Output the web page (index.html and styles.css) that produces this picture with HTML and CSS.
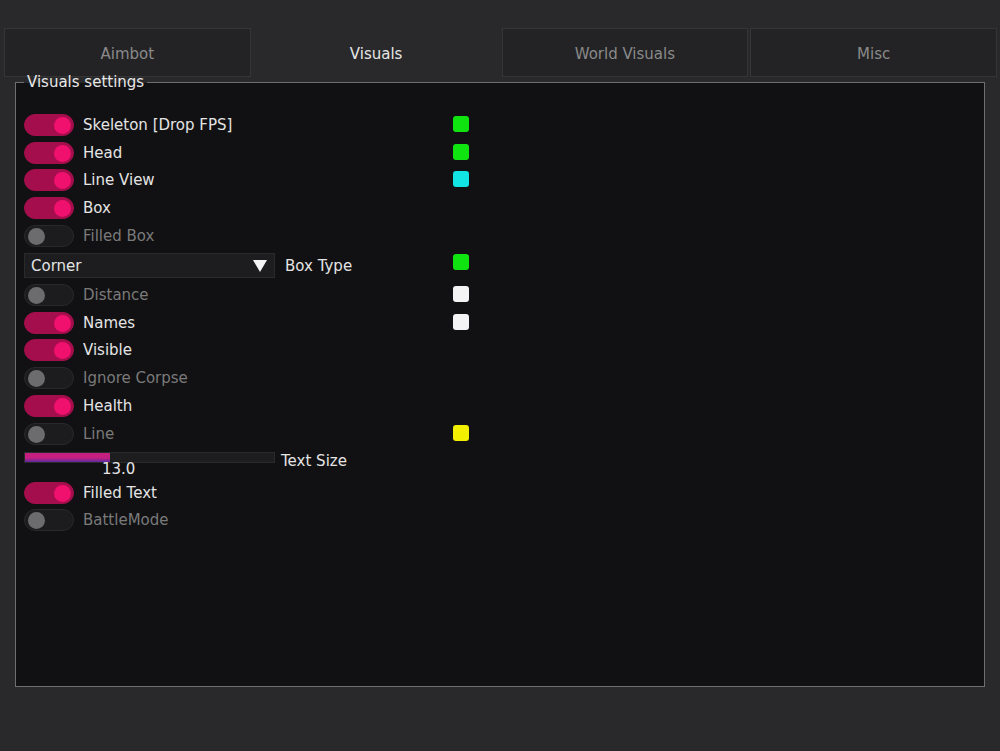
FILE: index.html
```html
<!DOCTYPE html>
<html lang="en">
<head>
    <meta charset="UTF-8">
    <meta name="viewport" content="width=device-width, initial-scale=1.0">
    <title>Visuals settings</title>
    <link rel="stylesheet" href="styles.css">
</head>
<body>
    <div class="tabs">
        <div class="tab">Aimbot</div>
        <div class="tab active">Visuals</div>
        <div class="tab">World Visuals</div>
        <div class="tab">Misc</div>
    </div>

    <fieldset class="panel">
        <legend>Visuals settings</legend>

        <div class="row">
            <div class="ctrl"><span class="toggle on"></span><span class="label">Skeleton [Drop FPS]</span></div>
            <span class="swatch green"></span>
        </div>
        <div class="row">
            <div class="ctrl"><span class="toggle on"></span><span class="label">Head</span></div>
            <span class="swatch green"></span>
        </div>
        <div class="row">
            <div class="ctrl"><span class="toggle on"></span><span class="label">Line View</span></div>
            <span class="swatch cyan"></span>
        </div>
        <div class="row">
            <div class="ctrl"><span class="toggle on"></span><span class="label">Box</span></div>
        </div>
        <div class="row">
            <div class="ctrl"><span class="toggle"></span><span class="label off">Filled Box</span></div>
        </div>

        <div class="row combo-row">
            <div class="ctrl">
                <div class="combo"><span>Corner</span><span class="arrow"></span></div>
                <span class="label">Box Type</span>
            </div>
            <span class="swatch green"></span>
        </div>

        <div class="row">
            <div class="ctrl"><span class="toggle"></span><span class="label off">Distance</span></div>
            <span class="swatch white"></span>
        </div>
        <div class="row">
            <div class="ctrl"><span class="toggle on"></span><span class="label">Names</span></div>
            <span class="swatch white"></span>
        </div>
        <div class="row">
            <div class="ctrl"><span class="toggle on"></span><span class="label">Visible</span></div>
        </div>
        <div class="row">
            <div class="ctrl"><span class="toggle"></span><span class="label off">Ignore Corpse</span></div>
        </div>
        <div class="row">
            <div class="ctrl"><span class="toggle on"></span><span class="label">Health</span></div>
        </div>
        <div class="row">
            <div class="ctrl"><span class="toggle"></span><span class="label off">Line</span></div>
            <span class="swatch yellow"></span>
        </div>

        <div class="slider-row">
            <div class="slider-line">
                <div class="slider"><div class="fill" style="width: 34%"></div></div>
                <span class="label">Text Size</span>
            </div>
            <div class="value">13.0</div>
        </div>

        <div class="row">
            <div class="ctrl"><span class="toggle on"></span><span class="label">Filled Text</span></div>
        </div>
        <div class="row">
            <div class="ctrl"><span class="toggle"></span><span class="label off">BattleMode</span></div>
        </div>
    </fieldset>
</body>
</html>
```

FILE: styles.css
```css
body{
    margin: 0;
    background-color: #29292b;
    font-family: "DejaVu Sans", Verdana, sans-serif;
    font-size: 15px;
    color: #e4e4e4;
    height: 751px;
    overflow: hidden;
}

.tabs{
    display: flex;
    gap: 2px;
    padding: 28px 3px 0 4px;
    height: 49px;
}

.tab{
    flex: 1;
    display: flex;
    justify-content: center;
    align-items: center;
    padding-top: 3px;
    background-color: #232325;
    border: 1px solid #353537;
    color: #8a8a8a;
}

.tab.active{
    background-color: #29292b;
    border-color: #29292b;
    color: #e6e6e6;
}

.panel{
    margin: -4px 15px 0 15px;
    padding: 20px 8px 0 8px;
    height: 614px;
    box-sizing: border-box;
    border: 1px solid #6e6e70;
    background-color: #111113;
    background-clip: padding-box;
}

.panel legend{
    padding: 0 3px;
    color: #e8e8e8;
    line-height: 18px;
}

.row{
    display: flex;
    align-items: center;
    height: 27.8px;
}

.ctrl{
    width: 429px;
    display: flex;
    align-items: center;
    gap: 9px;
}

.label{
    white-space: nowrap;
}

.label.off{
    color: #7a7a7a;
}

/* toggle switch */
.toggle{
    position: relative;
    width: 50px;
    height: 22px;
    border-radius: 11px;
    background-color: #1c1c1e;
    border: 1px solid #29292b;
    box-sizing: border-box;
    flex-shrink: 0;
}

.toggle::after{
    content: "";
    position: absolute;
    top: 2px;
    left: 3px;
    width: 17px;
    height: 17px;
    border-radius: 50%;
    background-color: #6c6c6e;
}

.toggle.on{
    background-color: #a50e4c;
    border-color: #a50e4c;
}

.toggle.on::after{
    left: 29px;
    background-color: #f0106e;
}

.swatch{
    width: 16px;
    height: 16px;
    margin-top: -2px;
    border-radius: 3px;
}
.green{ background-color: #10e410; }
.cyan{ background-color: #12e4e4; }
.white{ background-color: #f4f4f4; }
.yellow{ background-color: #f2f000; }

/* combo box */
.combo-row{
    height: 31px;
    padding-top: 1px;
    box-sizing: border-box;
}

.combo-row .ctrl{
    gap: 10px;
}

.combo-row .swatch{
    margin-top: -8px;
}

.combo{
    width: 251px;
    height: 25px;
    box-sizing: border-box;
    display: flex;
    align-items: center;
    justify-content: space-between;
    padding: 0 7px 0 6px;
    background-color: #1d1d1f;
    border: 1px solid #2a2a2c;
}

.arrow{
    width: 0;
    height: 0;
    border-left: 7px solid transparent;
    border-right: 7px solid transparent;
    border-top: 12px solid #f4f4f4;
}

/* slider */
.slider-row{
    height: 31px;
    padding-top: 4px;
    box-sizing: border-box;
}

.slider-line{
    display: flex;
    align-items: flex-start;
    gap: 6px;
    height: 11px;
}

.slider-line .label{
    margin-top: 0;
}

.slider{
    width: 251px;
    height: 11px;
    box-sizing: border-box;
    background-color: #1d1d1f;
    border: 1px solid #2a2a2c;
}

.fill{
    height: 100%;
    background: linear-gradient(#c51f80 55%, #5b2aa0);
}

.value{
    margin-top: -1px;
    padding-left: 78px;
    line-height: 15px;
}
```
